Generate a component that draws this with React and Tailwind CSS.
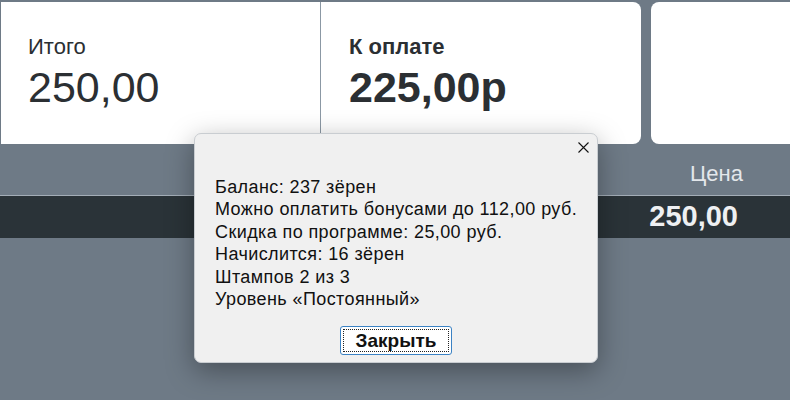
import React from "react";

export default function App() {
  return (
    <div
      className="relative w-[790px] h-[400px] overflow-hidden bg-[#6e7a86]"
      style={{ fontFamily: '"Liberation Sans", Arial, sans-serif' }}
    >
      {/* top cards */}
      <div className="flex pt-[2px] pl-px h-[144px]">
        <div className="w-[319px] h-full bg-white pl-[27px] pt-[33px] text-[#2b2f33]">
          <div className="text-[22px] leading-[24px]">Итого</div>
          <div className="text-[43px] leading-[50px] mt-[3px]">250,00</div>
        </div>
        <div className="w-px h-full bg-[#8b98a4]" />
        <div className="w-[320px] h-full bg-white rounded-r-[8px] pl-[28px] pt-[33px] text-[#2b2f33]">
          <div className="text-[22px] leading-[24px] font-bold">К оплате</div>
          <div className="text-[43px] leading-[50px] font-bold mt-[3px]">225,00р</div>
        </div>
        <div className="w-[10px]" />
        <div className="flex-1 h-full bg-white rounded-l-[8px]" />
      </div>

      {/* table header */}
      <div className="h-[52px] border-b border-[#a3adb7] flex items-center justify-end pr-[47px] pt-[7px]">
        <span className="text-[22px] text-[#e3e7eb]">Цена</span>
      </div>
      <div className="h-[42px] bg-[#2a3338] flex items-center justify-end pr-[52px]">
        <span className="text-[29px] font-bold text-[#eef0f2]">250,00</span>
      </div>

      {/* dialog */}
      <div className="absolute left-[194px] top-[133px] w-[404px] h-[230px] bg-[#f0f0f0] rounded-[7px] border border-[#c9cdd1] shadow-[0_8px_28px_rgba(0,0,0,0.35)]">
        <button className="absolute right-[7px] top-[6px] w-[14px] h-[14px] flex items-center justify-center">
          <svg width="11" height="11" viewBox="0 0 11 11">
            <path d="M0.5 0.5 L10.5 10.5 M10.5 0.5 L0.5 10.5" stroke="#111" strokeWidth="1.1" />
          </svg>
        </button>
        <div className="pl-[20px] pt-[42px] text-[18px] tracking-[0.4px] leading-[22.4px] text-[#111]">
          <div>Баланс: 237 зёрен</div>
          <div>Можно оплатить бонусами до 112,00 руб.</div>
          <div>Скидка по программе: 25,00 руб.</div>
          <div>Начислится: 16 зёрен</div>
          <div>Штампов 2 из 3</div>
          <div>Уровень «Постоянный»</div>
        </div>
        <div className="flex justify-center mt-[16px]">
          <div className="w-[112px] h-[29px] bg-white border border-[#3b82c4] rounded-[3px] p-[2px]">
            <div className="w-full h-full border border-dotted border-[#222] flex items-center justify-center text-[19px] font-bold text-[#111]">
              Закрыть
            </div>
          </div>
        </div>
      </div>
    </div>
  );
}
